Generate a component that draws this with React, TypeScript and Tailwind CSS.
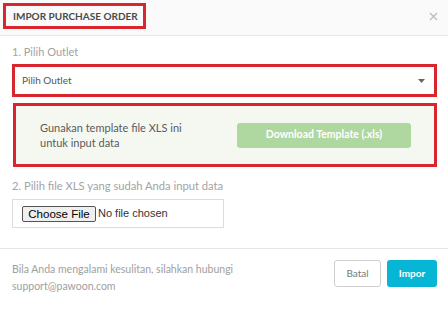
import React from "react";

export default function App() {
  const font = { fontFamily: '"Lato", "Open Sans", "Liberation Sans", sans-serif' };
  const arial = { fontFamily: '"Liberation Sans", Arial, sans-serif' };
  return (
    <div className="w-[448px] h-[309px] bg-white flex flex-col overflow-hidden" style={font}>
      {/* Header */}
      <div className="h-[36px] shrink-0 bg-[#fafafa] border-b border-[#e6e6e6] flex items-start justify-between pl-[3px] pt-[3px] pr-[10px]">
        <div className="h-[26px] w-[143px] border-[3px] border-[#d9252e] pl-[7px] flex items-center">
          <span className="text-[10px] font-bold text-[#4a4a4a]">IMPOR PURCHASE ORDER</span>
        </div>
        <div className="h-[26px] flex items-center">
          <svg width="9" height="9" viewBox="0 0 9 9" className="mt-[1px]">
            <path d="M1 1 L8 8 M8 1 L1 8" stroke="#bdbdbd" strokeWidth="1.3" />
          </svg>
        </div>
      </div>

      {/* Body */}
      <div className="px-[12px] pt-[8px] flex flex-col">
        <div className="text-[11px] leading-[16px] text-[#a3a3a3]">1. Pilih Outlet</div>
        <div className="mt-[4px] h-[33px] w-[425px] border-[3px] border-[#d9252e] bg-white flex items-center justify-between pl-[7px] pr-[9px]">
          <span className="text-[10px] text-[#555]">Pilih Outlet</span>
          <svg width="7" height="4" viewBox="0 0 7 4">
            <path d="M0 0 L7 0 L3.5 4 Z" fill="#666" />
          </svg>
        </div>
        <div className="mt-[6px] h-[64px] w-[424px] ml-[1px] border-[3px] border-[#d9252e] bg-[#f5f8f1] flex items-center pl-[24px] pr-[23px] justify-between">
          <div className="text-[11px] leading-[15px] text-[#5a5a5a] w-[170px]">
            Gunakan template file XLS ini
            <br />
            untuk input data
          </div>
          <div className="h-[25px] w-[174px] rounded-[3px] bg-[#afd8a0] flex items-center justify-center">
            <span className="text-[10.5px] font-bold text-white">Download Template (.xls)</span>
          </div>
        </div>
        <div className="mt-[11px] text-[11.2px] leading-[16px] text-[#a3a3a3]">2. Pilih file XLS yang sudah Anda input data</div>
        <div className="mt-[5px] h-[29px] w-[212px] border border-[#dcdcdc] flex items-center pl-[9px]">
          <span
            className="h-[16px] w-[74px] border border-[#555] rounded-[2px] bg-[#efefef] text-[11.5px] leading-[14px] text-black flex items-center justify-center"
            style={arial}
          >
            Choose File
          </span>
          <span className="ml-[2px] text-[11px] text-[#333]" style={arial}>
            No file chosen
          </span>
        </div>
      </div>

      {/* Footer */}
      <div className="mt-[20px] border-t border-[#e6e6e6] pt-[11px] px-[12px] flex items-start justify-between">
        <div className="text-[10.5px] leading-[17px] text-[#a0a0a0] mt-[1px]">
          Bila Anda mengalami kesulitan, silahkan hubungi
          <br />
          support@pawoon.com
        </div>
        <div className="flex gap-[6px] mr-[-1px]">
          <div className="h-[27px] w-[47px] border border-[#cfcfcf] rounded-[3px] bg-white flex items-center justify-center">
            <span className="text-[10px] text-[#777]">Batal</span>
          </div>
          <div className="h-[27px] w-[50px] rounded-[3px] bg-[#06b6d4] flex items-center justify-center">
            <span className="text-[10px] font-bold text-white">Impor</span>
          </div>
        </div>
      </div>
    </div>
  );
}
